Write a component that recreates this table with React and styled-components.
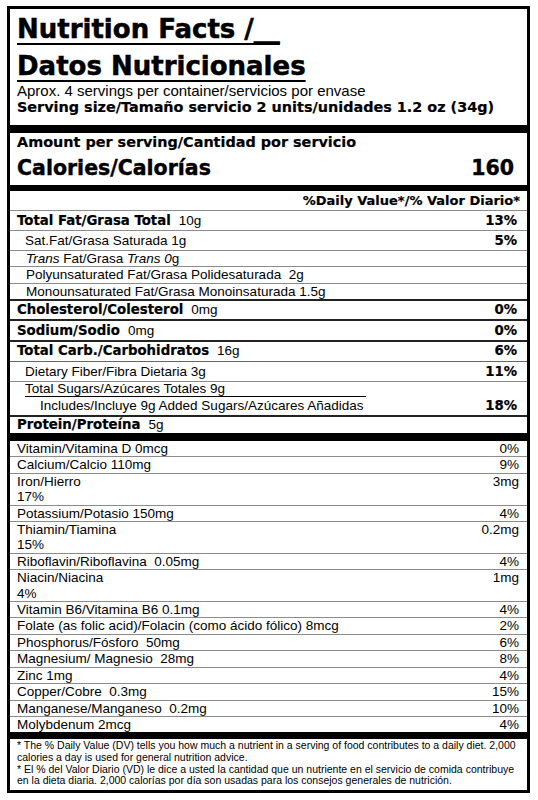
import styled, { createGlobalStyle } from "styled-components";

const GlobalStyle = createGlobalStyle`
  body {
    margin: 0;
    background: #fff;
    color: #000;
    font-family: "Liberation Sans", Arial, sans-serif;
  }
`;

const ruleWidth = { thin: 1, mid: 1.5, thick: 2, none: 0 };
const ruleColor = { thin: "#8c8c8c", mid: "#666", thick: "#222", none: "transparent" };

const vitamins = [
  { name: "Vitamin/Vitamina D 0mcg", value: "0%" },
  { name: "Calcium/Calcio 110mg", value: "9%" },
  { name: "Iron/Hierro", extra: "17%", value: "3mg" },
  { name: "Potassium/Potasio 150mg", value: "4%" },
  { name: "Thiamin/Tiamina", extra: "15%", value: "0.2mg" },
  { name: "Riboflavin/Riboflavina  0.05mg", value: "4%" },
  { name: "Niacin/Niacina", extra: "4%", value: "1mg" },
  { name: "Vitamin B6/Vitamina B6 0.1mg", value: "4%" },
  { name: "Folate (as folic acid)/Folacin (como ácido fólico) 8mcg", value: "2%" },
  { name: "Phosphorus/Fósforo  50mg", value: "6%" },
  { name: "Magnesium/ Magnesio  28mg", value: "8%" },
  { name: "Zinc 1mg", value: "4%" },
  { name: "Copper/Cobre  0.3mg", value: "15%" },
  { name: "Manganese/Manganeso  0.2mg", value: "10%" },
  { name: "Molybdenum 2mcg", value: "4%" },
];

const NutritionLabel = () => {
  return (
    <Page>
      <GlobalStyle />
      <Label>
        <Header>
          <Title>
            <Underlined>Nutrition Facts /__</Underlined>
          </Title>
          <Title>
            <Underlined>Datos Nutricionales</Underlined>
          </Title>
          <Servings>Aprox. 4 servings per container/servicios por envase</Servings>
          <ServingSize>Serving size/Tamaño servicio 2 units/unidades 1.2 oz (34g)</ServingSize>
        </Header>
        <Bar $h={8} />
        <CalorieBlock>
          <AmountLine>Amount per serving/Cantidad por servicio</AmountLine>
          <CaloriesLine>
            <span>Calories/Calorías</span>
            <span>160</span>
          </CaloriesLine>
        </CalorieBlock>
        <Bar $h={6} />

        <DvHeader>%Daily Value*/% Valor Diario*</DvHeader>

        <Row $h={20} $rule="thin">
          <span>
            <Bold>Total Fat/Grasa Total</Bold>
            <Amount>10g</Amount>
          </span>
          <Bold>13%</Bold>
        </Row>
        <Row $h={20} $rule="thin" $indent={8}>
          <span>Sat.Fat/Grasa Saturada 1g</span>
          <Bold>5%</Bold>
        </Row>
        <Row $h={16} $rule="thin" $indent={9}>
          <span>
            <i>Trans</i> Fat/Grasa <i>Trans 0</i>g
          </span>
        </Row>
        <Row $h={17} $rule="thin" $indent={9}>
          <span>Polyunsaturated Fat/Grasa Polidesaturada  2g</span>
        </Row>
        <Row $h={17} $rule="thick" $indent={9}>
          <span>Monounsaturated Fat/Grasa Monoinsaturada 1.5g</span>
        </Row>
        <Row $h={20} $rule="thick">
          <span>
            <Bold>Cholesterol/Colesterol</Bold>
            <Amount>0mg</Amount>
          </span>
          <Bold>0%</Bold>
        </Row>
        <Row $h={21} $rule="thick">
          <span>
            <Bold>Sodium/Sodio</Bold>
            <Amount>0mg</Amount>
          </span>
          <Bold>0%</Bold>
        </Row>
        <Row $h={20} $rule="mid">
          <span>
            <Bold>Total Carb./Carbohidratos</Bold>
            <Amount>16g</Amount>
          </span>
          <Bold>6%</Bold>
        </Row>
        <Row $h={20} $rule="thin" $indent={8}>
          <span>Dietary Fiber/Fibra Dietaria 3g</span>
          <Bold>11%</Bold>
        </Row>
        <SugarRow>
          <SugarLine>Total Sugars/Azúcares Totales 9g</SugarLine>
          <AddedLine>
            <span>Includes/Incluye 9g Added Sugars/Azúcares Añadidas</span>
            <Bold>18%</Bold>
          </AddedLine>
        </SugarRow>
        <Row $h={16} $rule="none">
          <span>
            <Bold>Protein/Proteína</Bold>
            <Amount>5g</Amount>
          </span>
        </Row>
        <Bar $h={8} />

        {vitamins.map((v, i) => (
          <VitaminRow key={v.name} $last={i === vitamins.length - 1}>
            <div>
              <div>{v.name}</div>
              {v.extra && <div>{v.extra}</div>}
            </div>
            <span>{v.value}</span>
          </VitaminRow>
        ))}
        <Bar $h={7} />

        <Footnote>
          <div>* The % Daily Value (DV) tells you how much a nutrient in a serving of food contributes to a daily diet. 2,000</div>
          <div>calories a day is used for general nutrition advice.</div>
          <div>* El % del Valor Diario (VD) le dice a usted la cantidad que un nutriente en el servicio de comida contribuye</div>
          <div>en la dieta diaria. 2,000 calorías por día son usadas para los consejos generales de nutrición.</div>
        </Footnote>
      </Label>
    </Page>
  );
};

export default function App() {
  return <NutritionLabel />;
}

const Page = styled.div`
  padding: 6px 0 0 7px;
`;

const Label = styled.div`
  width: 523px;
  box-sizing: border-box;
  border: 3px solid #000;
  background: #fff;
`;

const Header = styled.div`
  padding: 2px 7px 10px;
`;

const Title = styled.div`
  font-family: "DejaVu Sans", sans-serif;
  font-weight: bold;
  font-size: 26px;
  line-height: 36.5px;
  white-space: pre;
  -webkit-text-stroke: 0.5px #000;
`;

const Underlined = styled.span`
  text-decoration: underline;
  text-decoration-thickness: 2px;
  text-underline-offset: 5px;
`;

const Servings = styled.div`
  margin-top: -1px;
  font-size: 15px;
  line-height: 16px;
`;

const ServingSize = styled.div`
  font-family: "DejaVu Sans", sans-serif;
  font-weight: bold;
  font-size: 14.4px;
  line-height: 16px;
  white-space: nowrap;
  -webkit-text-stroke: 0.2px #000;
`;

const Bar = styled.div`
  height: ${(p) => p.$h}px;
  background: #000;
`;

const CalorieBlock = styled.div`
  padding: 0 13px 4px 7px;
  font-family: "DejaVu Sans", sans-serif;
  font-weight: bold;
  -webkit-text-stroke: 0.2px #000;
`;

const AmountLine = styled.div`
  font-size: 14.4px;
  line-height: 19px;
`;

const CaloriesLine = styled.div`
  display: flex;
  justify-content: space-between;
  margin-top: 3px;
  font-size: 20.5px;
  line-height: 26px;
  -webkit-text-stroke: 0.4px #000;
`;

const DvHeader = styled.div`
  box-sizing: border-box;
  height: 20px;
  padding-right: 7px;
  border-bottom: 1px solid #8c8c8c;
  text-align: right;
  font-family: "DejaVu Sans", sans-serif;
  font-weight: bold;
  font-size: 13px;
  line-height: 19px;
  -webkit-text-stroke: 0.2px #000;
`;

const Row = styled.div`
  display: flex;
  justify-content: space-between;
  align-items: baseline;
  box-sizing: border-box;
  height: ${(p) => p.$h}px;
  line-height: ${(p) => p.$h - ruleWidth[p.$rule]}px;
  padding: 0 10px 0 ${(p) => 7 + (p.$indent || 0)}px;
  border-bottom: ${(p) => ruleWidth[p.$rule]}px solid ${(p) => ruleColor[p.$rule]};
  font-size: 13.5px;
  white-space: pre;
`;

const Bold = styled.span`
  font-family: "DejaVu Sans", sans-serif;
  font-weight: bold;
  font-size: 13.3px;
  -webkit-text-stroke: 0.2px #000;
`;

const Amount = styled.span`
  margin-left: 8px;
`;

const SugarRow = styled.div`
  box-sizing: border-box;
  height: 35px;
  padding: 0 10px 0 15px;
  border-bottom: 2px solid #222;
  font-size: 13.5px;
  white-space: pre;
`;

const SugarLine = styled.div`
  width: 341px;
  line-height: 14px;
  border-bottom: 1px solid #000;
`;

const AddedLine = styled.div`
  display: flex;
  justify-content: space-between;
  align-items: baseline;
  padding-left: 15px;
  line-height: 17px;
`;

const VitaminRow = styled.div`
  display: flex;
  justify-content: space-between;
  align-items: flex-start;
  padding: 0 8px 0 7px;
  font-size: 13.5px;
  line-height: 15.4px;
  white-space: pre;
  border-bottom: ${(p) => (p.$last ? "none" : "1px solid #8c8c8c")};
`;

const Footnote = styled.div`
  padding: 1px 7px 3px;
  font-size: 10.5px;
  line-height: 11.7px;
  white-space: nowrap;
`;
